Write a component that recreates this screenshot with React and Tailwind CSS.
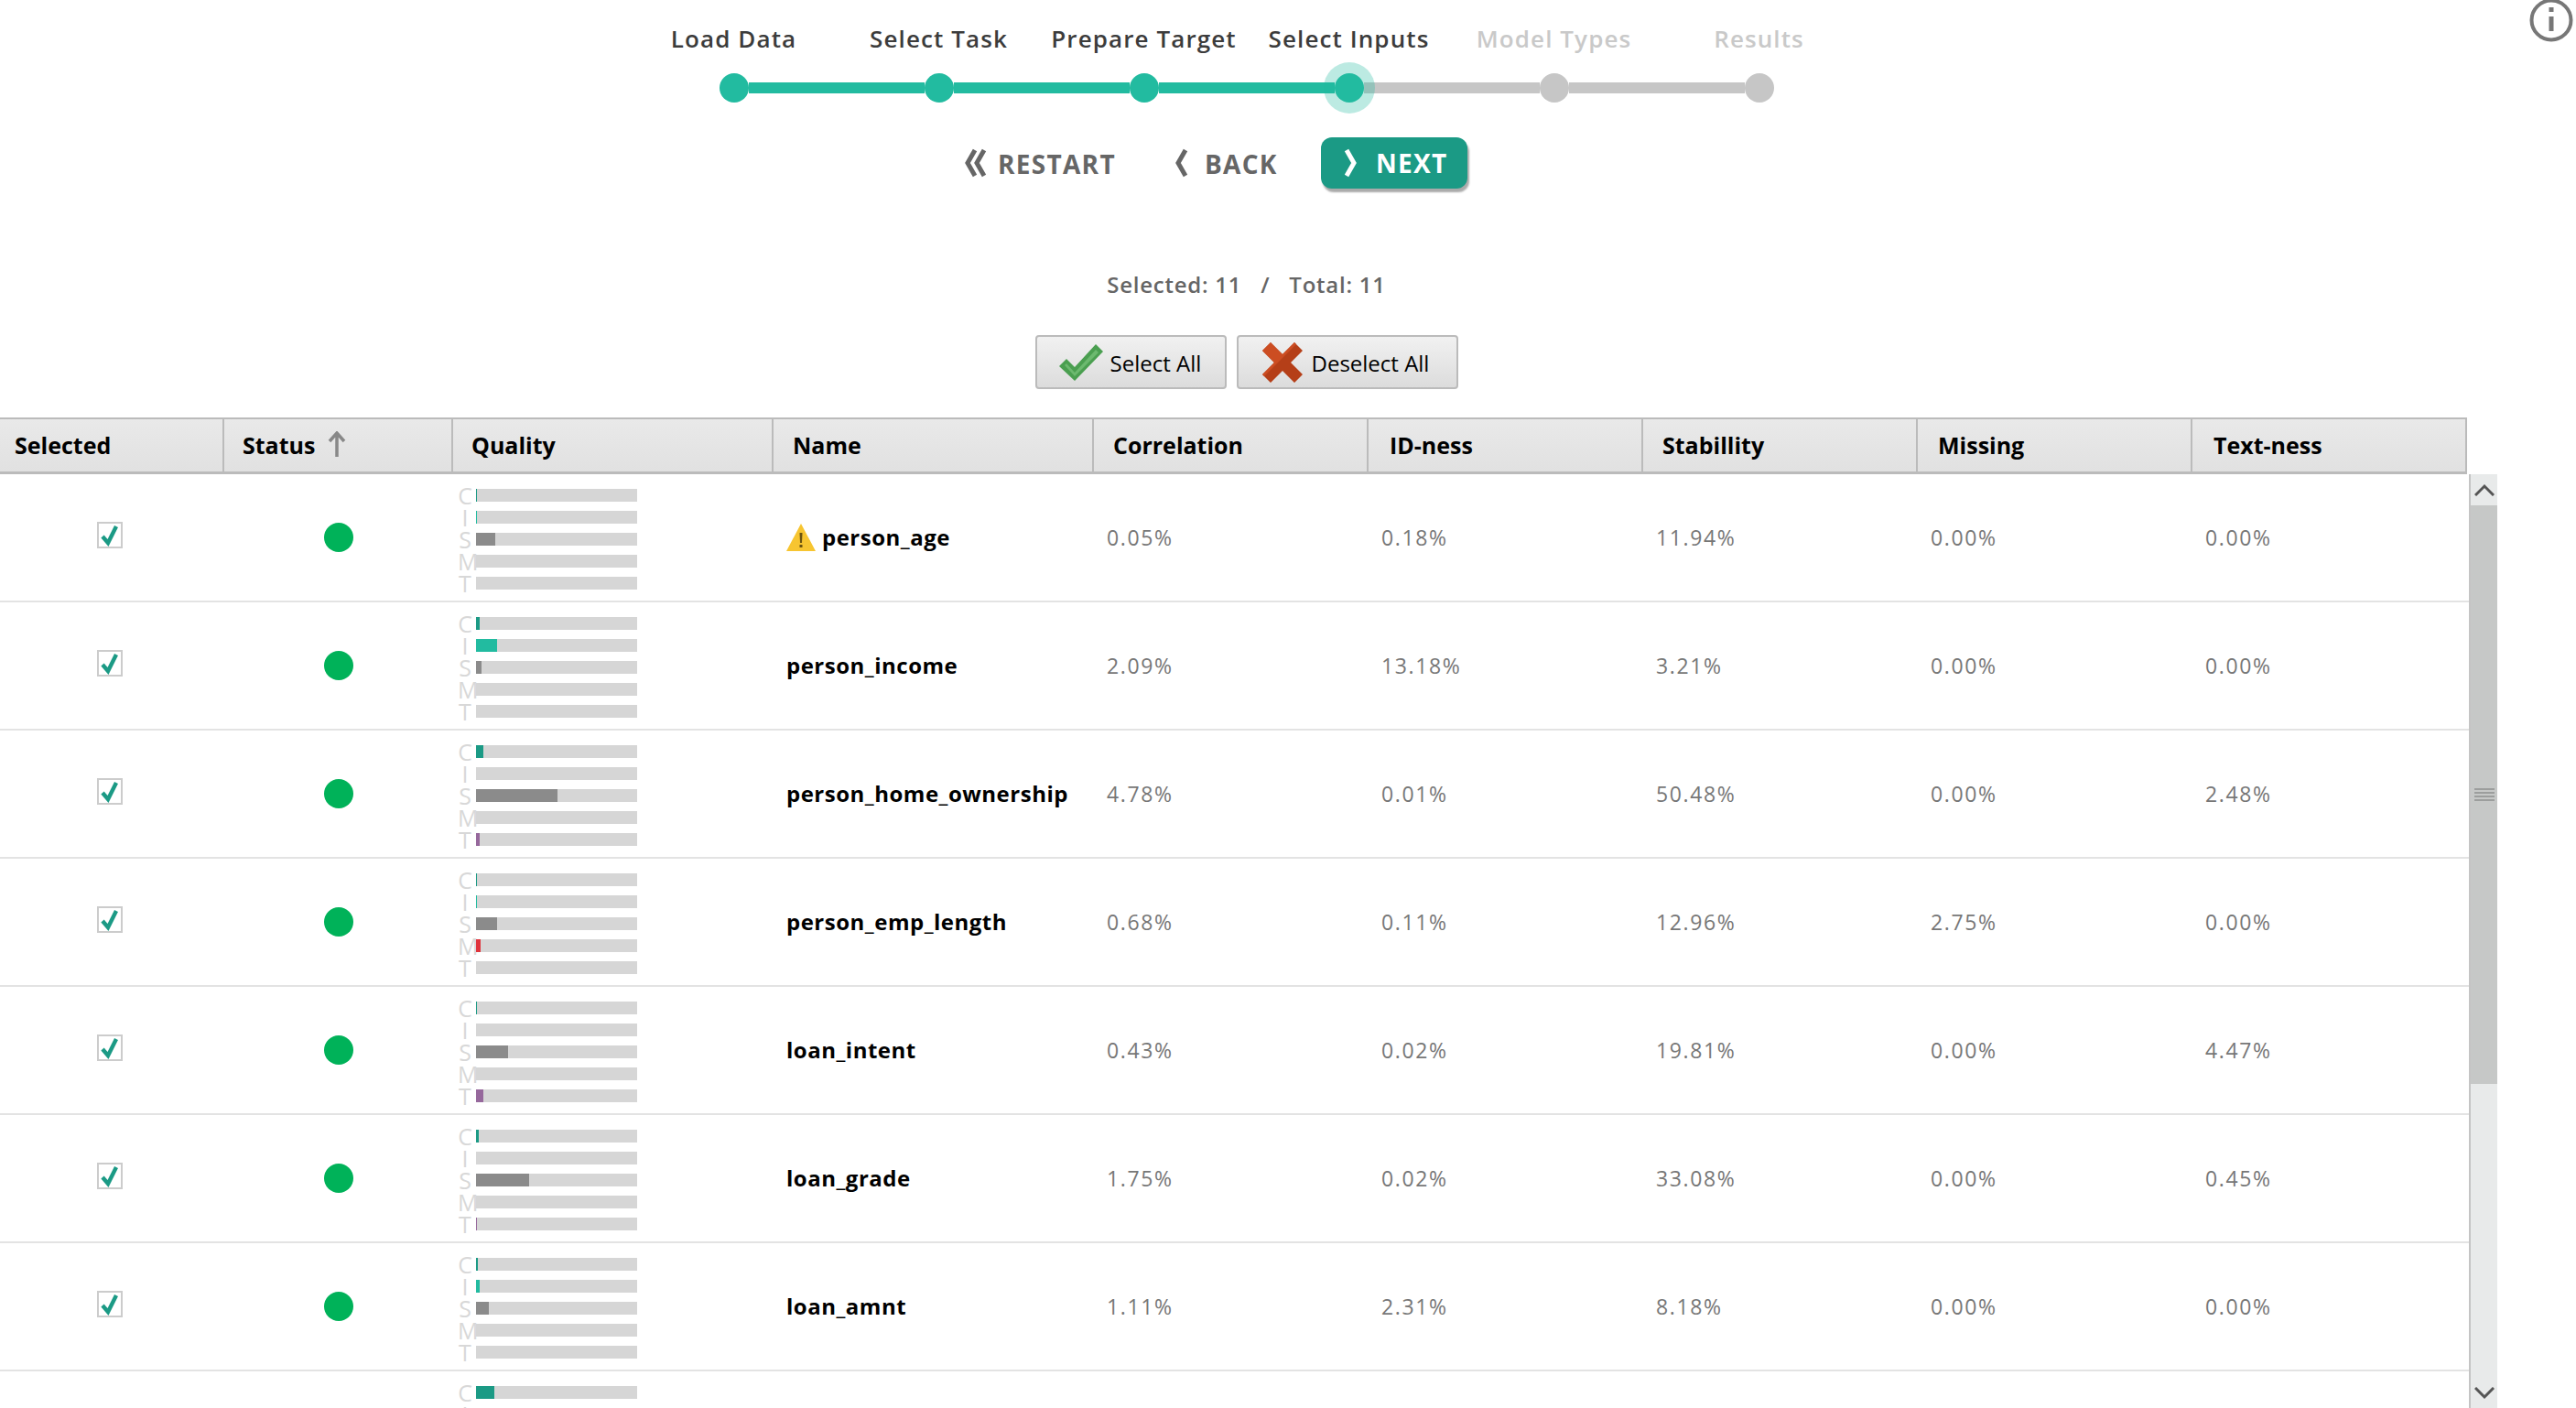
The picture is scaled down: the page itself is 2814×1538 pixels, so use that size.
import React from 'react';

const steps = [
  { label: 'Load Data', done: true },
  { label: 'Select Task', done: true },
  { label: 'Prepare Target', done: true },
  { label: 'Select Inputs', done: true, current: true },
  { label: 'Model Types', done: false },
  { label: 'Results', done: false },
];

const columns = [
  { label: 'Selected', width: 'w-[245px]', pad: 'pl-[16px]' },
  { label: 'Status', width: 'w-[250px]', pad: 'pl-[20px]', sorted: true },
  { label: 'Quality', width: 'w-[350px]', pad: 'pl-[20px]' },
  { label: 'Name', width: 'w-[350px]', pad: 'pl-[21px]' },
  { label: 'Correlation', width: 'w-[300px]', pad: 'pl-[21px]' },
  { label: 'ID-ness', width: 'w-[300px]', pad: 'pl-[23px]' },
  { label: 'Stabillity', width: 'w-[300px]', pad: 'pl-[21px]' },
  { label: 'Missing', width: 'w-[300px]', pad: 'pl-[22px]' },
  { label: 'Text-ness', width: 'w-[300px]', pad: 'pl-[23px]' },
];

const rows = [
  { name: 'person_age', warn: true, c: 0.05, i: 0.18, s: 11.94, m: 0, t: 0 },
  { name: 'person_income', c: 2.09, i: 13.18, s: 3.21, m: 0, t: 0 },
  { name: 'person_home_ownership', c: 4.78, i: 0.01, s: 50.48, m: 0, t: 2.48 },
  { name: 'person_emp_length', c: 0.68, i: 0.11, s: 12.96, m: 2.75, t: 0 },
  { name: 'loan_intent', c: 0.43, i: 0.02, s: 19.81, m: 0, t: 4.47 },
  { name: 'loan_grade', c: 1.75, i: 0.02, s: 33.08, m: 0, t: 0.45 },
  { name: 'loan_amnt', c: 1.11, i: 2.31, s: 8.18, m: 0, t: 0 },
];

const Chevron = ({ className = '' }) => (
  <svg viewBox="0 0 16 32" className={className} fill="none" stroke="currentColor" strokeWidth="5">
    <path d="M13 2 L5 16 L13 30" />
  </svg>
);

const Meter = ({ letter, value, color }) => (
  <div className="flex h-[24px] items-center">
    <span className="w-[20px] text-[25px] font-normal leading-[24px] text-[#d8d8d8]">
      <span className="inline-block w-[16px] text-center">{letter}</span>
    </span>
    <div className="relative h-[14px] w-[176px] bg-[#d6d6d6]">
      <div className={`h-full ${color}`} style={{ width: `${(value * 176) / 100}px` }} />
    </div>
  </div>
);

const Quality = ({ row }) => (
  <div className="flex flex-col pt-[11px]">
    <Meter letter="C" value={row.c} color="bg-[#1b9a85]" />
    <Meter letter="I" value={row.i} color="bg-[#22bba0]" />
    <Meter letter="S" value={row.s} color="bg-[#8b8b8b]" />
    <Meter letter="M" value={row.m} color="bg-[#e0343c]" />
    <Meter letter="T" value={row.t} color="bg-[#96689c]" />
  </div>
);

const Pct = ({ value }) => (
  <div className="w-[300px] pl-[14px] text-[23px] tracking-[1.6px] text-[#777777]">{value.toFixed(2)}%</div>
);

const Row = ({ row }) => (
  <div className="flex h-[140px] items-center border-b-2 border-[#e3e3e3]">
    <div className="flex w-[245px] justify-center pr-[5px]">
      <div className="mb-[5px] flex h-[29px] w-[28px] items-center justify-center border-2 border-[#cccccc]">
        <svg viewBox="0 0 24 24" className="h-[24px] w-[24px]" fill="none" stroke="#1b9a85" strokeWidth="4.4">
          <path d="M4 13 L10 20 L19 2" />
        </svg>
      </div>
    </div>
    <div className="flex w-[250px] justify-center">
      <div className="h-[32px] w-[32px] rounded-full bg-[#00b259]" />
    </div>
    <div className="h-full w-[350px] pl-[5px]">
      <Quality row={row} />
    </div>
    <div className="flex w-[350px] items-center gap-[7px] pl-[14px] text-[24px] font-bold tracking-[0.5px] text-black">
      {row.warn && (
        <svg viewBox="0 0 32 32" className="h-[32px] w-[32px] shrink-0">
          <path d="M16 1 L32 31 L0 31 Z" fill="#f7c531" />
          <path d="M14.5 11 H17.5 L17 22 H15 Z" fill="#6b5310" />
          <rect x="14.5" y="24" width="3" height="3" fill="#6b5310" />
        </svg>
      )}
      {row.name}
    </div>
    <Pct value={row.c} />
    <Pct value={row.i} />
    <Pct value={row.s} />
    <Pct value={row.m} />
    <Pct value={row.t} />
  </div>
);

const Scrollbar = () => (
  <div className="flex h-[1020px] w-[31px] flex-col border-l-2 border-[#c4c4c4] bg-[#e8eaea]">
    <div className="flex h-[34px] items-center justify-center">
      <svg viewBox="0 0 22 14" className="h-[14px] w-[22px]" fill="none" stroke="#555555" strokeWidth="3">
        <path d="M1 13 L11 3 L21 13" />
      </svg>
    </div>
    <div className="flex h-[632px] flex-col items-center justify-center gap-[2px] bg-[#c6c8c7]">
      <div className="h-[2px] w-[22px] bg-[#9c9e9d]" />
      <div className="h-[2px] w-[22px] bg-[#9c9e9d]" />
      <div className="h-[2px] w-[22px] bg-[#9c9e9d]" />
      <div className="h-[2px] w-[22px] bg-[#9c9e9d]" />
    </div>
    <div className="mt-auto flex h-[30px] items-center justify-center pb-[2px]">
      <svg viewBox="0 0 22 14" className="h-[14px] w-[22px]" fill="none" stroke="#555555" strokeWidth="3">
        <path d="M1 1 L11 11 L21 1" />
      </svg>
    </div>
  </div>
);

export default function App() {
  return (
    <div className="relative h-[1538px] w-[2814px] overflow-hidden bg-white font-['Open_Sans',sans-serif]">
      {/* Info */}
      <svg viewBox="0 0 48 48" className="absolute right-[3px] top-[-2px] h-[48px] w-[48px]" fill="none">
        <circle cx="24" cy="24" r="21.5" stroke="#777777" strokeWidth="4" />
        <rect x="21.5" y="20" width="5" height="16" fill="#777777" />
        <rect x="21.5" y="10" width="5" height="5" fill="#777777" />
      </svg>

      {/* Stepper */}
      <div className="flex w-[2723px] flex-col items-center pt-[24px]">
        <div className="flex">
          {steps.map((s) => (
            <div
              key={s.label}
              className={`w-[224px] text-center text-[26px] font-semibold leading-[36px] tracking-[1.1px] whitespace-nowrap ${
                s.done ? 'text-[#3c3c3c]' : 'text-[#c9c9c9]'
              }`}
            >
              {s.label}
            </div>
          ))}
        </div>
        <div className="mt-[20px] flex items-center">
          {steps.map((s, i) => (
            <React.Fragment key={s.label}>
              <div
                className={`relative z-10 h-[32px] w-[32px] rounded-full ${s.done ? 'bg-[#22bba0]' : 'bg-[#c6c6c6]'} ${
                  s.current ? 'shadow-[0_0_0_12px_rgba(34,187,160,0.3)]' : ''
                }`}
              />
              {i < steps.length - 1 && (
                <div className={`h-[12px] w-[192px] ${steps[i + 1].done ? 'bg-[#22bba0]' : 'bg-[#c6c6c6]'}`} />
              )}
            </React.Fragment>
          ))}
        </div>

        {/* Nav buttons */}
        <div className="mt-[38px] mr-[68px] flex h-[56px] w-[551px] items-center text-[28px] font-bold tracking-[1.3px]">
          <div className="flex w-[165px] shrink-0 items-center text-[#666666]">
            <div className="flex w-[28px]">
              <Chevron className="h-[32px] w-[16px]" />
              <Chevron className="ml-[-6px] h-[32px] w-[16px]" />
            </div>
            <span className="ml-[12px] mt-[2px]">RESTART</span>
          </div>
          <div className="ml-[65px] flex items-center text-[#666666]">
            <Chevron className="h-[32px] w-[16px]" />
            <span className="ml-[18px] mt-[2px]">BACK</span>
          </div>
          <div className="ml-auto flex h-[56px] w-[160px] items-center rounded-[12px] bg-[#1b9a85] pl-[25px] text-white shadow-[2px_4px_2px_#aaaaaa]">
            <Chevron className="h-[32px] w-[16px] rotate-180" />
            <span className="ml-[19px]">NEXT</span>
          </div>
        </div>

        {/* Counts */}
        <div className="mt-[87px] text-[24px] font-semibold leading-[36px] tracking-[0.75px] text-[#666666] whitespace-pre">
          Selected: 11{'   /   '}Total: 11
        </div>

        {/* Select buttons */}
        <div className="mt-[37px] flex gap-[11px]">
          <div className="flex h-[59px] w-[209px] items-center rounded-[4px] border-2 border-[#bbbbbb] bg-gradient-to-b from-[#f1f1f1] to-[#dcdcdc] pl-[24px] text-[24px] text-black">
            <svg viewBox="0 0 48 40" className="h-[40px] w-[48px]">
              <path d="M0 24 L8 16 L17 25 L40 0 L48 8 L17 40 Z" fill="#4a9f50" />
              <path d="M6 23 L8 21 L17 31 L40 6 L43 9 L17 35 Z" fill="#6cb96f" />
            </svg>
            <span className="ml-[8px] mt-[2px]">Select All</span>
          </div>
          <div className="flex h-[59px] w-[242px] items-center rounded-[4px] border-2 border-[#bbbbbb] bg-gradient-to-b from-[#f1f1f1] to-[#dcdcdc] pl-[26px] text-[24px] text-black">
            <svg viewBox="0 0 44 44" className="h-[44px] w-[44px] shrink-0">
              <path d="M0 9 L9 0 L22 13 L35 0 L44 9 L31 22 L44 35 L35 44 L22 31 L9 44 L0 35 L13 22 Z" fill="#b53f18" />
              <path d="M0 9 L9 0 L22 13 L35 0 L37 2 L2 37 L0 35 L13 22 Z" fill="#cc4d22" />
            </svg>
            <span className="ml-[10px] mt-[2px]">Deselect All</span>
          </div>
        </div>
      </div>

      {/* Table */}
      <div className="mt-[31px]">
        <div className="flex h-[62px] w-[2695px] border-y-2 border-b-[3px] border-y-[#bbbbbb] bg-gradient-to-b from-[#e9e9e9] to-[#e1e1e1]">
          {columns.map((col) => (
            <div
              key={col.label}
              className={`flex items-center border-r-2 border-[#bbbbbb] text-[25px] font-bold text-black ${col.width} ${col.pad}`}
            >
              {col.label}
              {col.sorted && (
                <svg viewBox="0 0 20 28" className="ml-[14px] mb-[4px] h-[28px] w-[20px]" fill="none" stroke="#888888" strokeWidth="3.5">
                  <path d="M10 28 V3 M2 11 L10 2 L18 11" />
                </svg>
              )}
            </div>
          ))}
        </div>
        <div className="flex">
          <div className="w-[2697px]">
            {rows.map((row) => (
              <Row key={row.name} row={row} />
            ))}
            <div className="flex h-[140px] border-b-2 border-[#e3e3e3]">
              <div className="ml-[495px] h-full w-[350px] pl-[5px]">
                <Quality row={{ c: 11.4, i: 0, s: 0, m: 0, t: 0 }} />
              </div>
            </div>
          </div>
          <Scrollbar />
        </div>
      </div>
    </div>
  );
}
